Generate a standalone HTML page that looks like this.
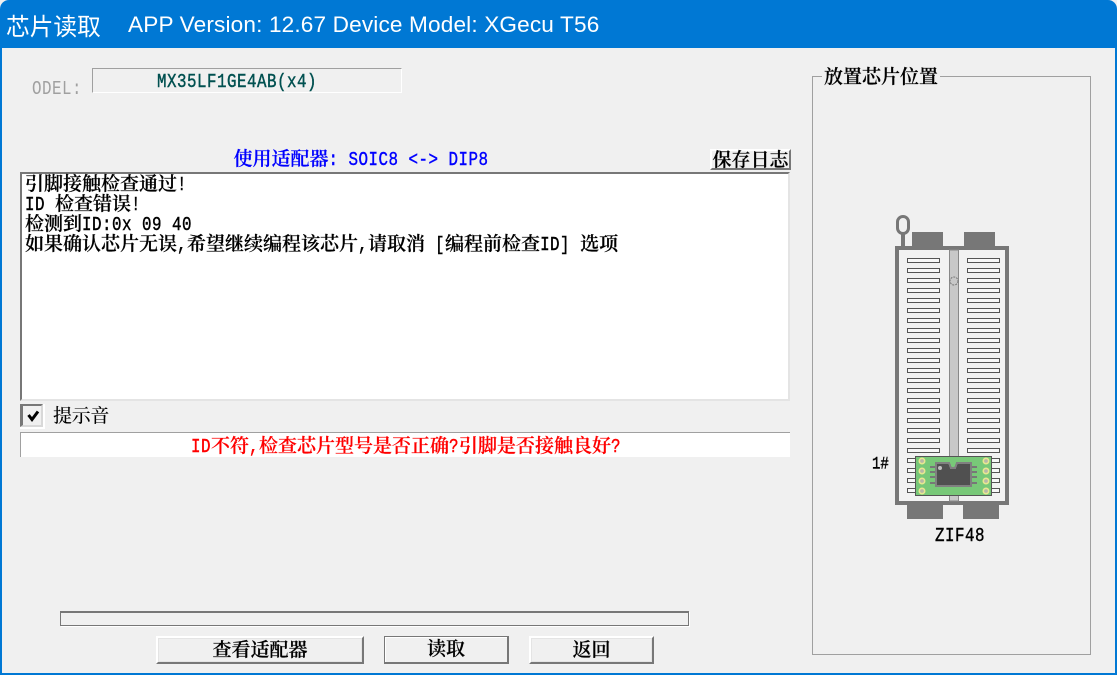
<!DOCTYPE html>
<html><head><meta charset="utf-8">
<style>
html,body{margin:0;padding:0;background:#fff}
#w{position:relative;width:1117px;height:675px;overflow:hidden;background:#f0f0f0;font-family:"Noto Serif CJK SC","Liberation Serif",serif;font-size:19px;color:#000}
#w *{box-sizing:border-box}
.a{position:absolute;white-space:pre;line-height:20px}
i{display:inline-block;font-style:normal;font-family:"Liberation Mono",monospace;font-size:15.83px;letter-spacing:.5px;font-weight:normal;white-space:pre;transform:translateY(-1px) scaleY(1.22);-webkit-text-stroke:.35px currentColor}
.t{font-weight:600;-webkit-text-stroke:.2px currentColor}
.btn{position:absolute;background:#f0f0f0;border:2px solid;border-color:#fff #777 #777 #fff;box-shadow:inset 0 0 0 1px #e4e4e4;text-align:center;white-space:nowrap;font-weight:600;-webkit-text-stroke:.2px currentColor}
</style></head><body>
<div id="w">
<div class="a" style="left:0;top:0;width:1117px;height:48px;background:#0078d4;border-radius:9px 9px 0 0"></div>
<div class="a" style="left:0;top:40px;width:2px;height:635px;background:#0078d4"></div>
<div class="a" style="left:1115px;top:40px;width:2px;height:635px;background:#0078d4"></div>
<div class="a" style="left:0;top:673px;width:1117px;height:2px;background:#0078d4"></div>
<div class="a" style="left:6px;top:11px;color:#fff;font:23.7px/28px 'Noto Sans CJK SC',sans-serif">芯片读取</div>
<div class="a" style="left:128px;top:11px;color:#fff;font:22.6px/28px 'Liberation Sans',sans-serif;letter-spacing:.15px">APP Version: 12.67 Device Model: XGecu T56</div>

<div class="a" style="left:32px;top:77px;color:#a0a0a0"><i style="-webkit-text-stroke:0">ODEL:</i></div>
<div class="a" style="left:92px;top:68px;width:310px;height:25px;border:1px solid;border-color:#a0a0a0 #fff #fff #a0a0a0"></div>
<div class="a" style="left:157px;top:70px;color:#005050"><i>MX35LF1GE4AB(x4)</i></div>

<div class="a t" style="left:233.500px;top:148px;color:#0000ff">使用适配器<i>: SOIC8 &lt;-&gt; DIP8</i></div>
<div class="btn" style="left:710px;top:149px;width:81px;height:21px;line-height:16px;box-shadow:none">保存日志</div>

<div class="a" style="left:20px;top:172px;width:770px;height:229px;background:#fff;border:2px solid;border-color:#777 #e4e4e4 #e4e4e4 #777"></div>
<div class="a t" style="left:25px;top:173px">引脚接触检查通过<i>!</i></div>
<div class="a t" style="left:25px;top:193px"><i>ID </i>检查错误<i>!</i></div>
<div class="a t" style="left:25px;top:213px">检测到<i>ID:0x 09 40</i></div>
<div class="a t" style="left:25px;top:233px">如果确认芯片无误<i>,</i>希望继续编程该芯片<i>,</i>请取消<i> [</i>编程前检查<i>ID] </i>选项</div>

<div class="a" style="left:20px;top:404px;width:25px;height:25px;background:#fff"></div>
<div class="a" style="left:20px;top:404px;width:23px;height:23px;background:#f0f0f0;border:2px solid;border-color:#777 #d8d8d8 #d8d8d8 #777;border-width:2px 2px 2px 3px"></div>
<svg class="a" style="left:20px;top:404px" width="25" height="25"><path d="M8.500 11 L12 15.500 L18 7.500" fill="none" stroke="#000" stroke-width="3"/></svg>
<div class="a" style="left:53px;top:405px;font-weight:500;width:57px;letter-spacing:-.3px">提示音</div>

<div class="a" style="left:20px;top:432px;width:770px;height:25px;background:#fff;border-top:1px solid #a0a0a0;border-left:1px solid #a0a0a0"></div>
<div class="a t" style="left:191px;top:435px;color:#ff0000"><i>ID</i>不符<i>,</i>检查芯片型号是否正确<i>?</i>引脚是否接触良好<i>?</i></div>

<div class="a" style="left:60px;top:611px;width:629px;height:15px;background:#f0f0f0;border:1px solid;border-width:2px 1px 1px 1px;border-color:#777;box-shadow:1px 1px 0 #fff"></div>
<div class="btn" style="left:156px;top:636px;width:208px;height:28px;line-height:22px">查看适配器</div>
<div class="btn" style="left:384px;top:636px;width:125px;height:28px;line-height:22px;border-color:#777;border-width:1px 2px 2px 1px;box-shadow:inset 1px 1px 0 #fff">读取</div>
<div class="btn" style="left:529px;top:636px;width:125px;height:28px;line-height:22px">返回</div>

<div class="a" style="left:812px;top:76px;width:279px;height:579px;border:1px solid #a0a0a0"></div>
<div class="a t" style="left:822px;top:66px;padding:0 2px;background:#f0f0f0;height:20px">放置芯片位置</div>

<svg class="a" style="left:860px;top:200px" width="170" height="320" shape-rendering="crispEdges">
<g fill="#777">
<rect x="52" y="32" width="31" height="15"/><rect x="104" y="32" width="31" height="15"/>
<rect x="47" y="305" width="36" height="14"/><rect x="103" y="305" width="36" height="14"/>
<rect x="41" y="28" width="4" height="20"/>
</g>
<rect x="37.500" y="16.500" width="11" height="17" rx="5.500" fill="#f0f0f0" stroke="#777" stroke-width="3" shape-rendering="auto"/>
<rect x="37" y="48" width="110" height="255" fill="#f2f2f2" stroke="#777" stroke-width="4"/>
<rect x="89.500" y="50" width="9" height="251" fill="#c8c8c8" stroke="#888" stroke-width="1"/>
<circle cx="94" cy="81" r="4" fill="none" stroke="#777" stroke-dasharray="2 1" shape-rendering="auto"/>
<g fill="#f8f8f8" stroke="#555" stroke-width="1">
<rect x="47.500" y="58.500" width="32" height="4"/><rect x="107.500" y="58.500" width="32" height="4"/>
<rect x="47.500" y="68.500" width="32" height="4"/><rect x="107.500" y="68.500" width="32" height="4"/>
<rect x="47.500" y="78.500" width="32" height="4"/><rect x="107.500" y="78.500" width="32" height="4"/>
<rect x="47.500" y="88.500" width="32" height="4"/><rect x="107.500" y="88.500" width="32" height="4"/>
<rect x="47.500" y="98.500" width="32" height="4"/><rect x="107.500" y="98.500" width="32" height="4"/>
<rect x="47.500" y="108.500" width="32" height="4"/><rect x="107.500" y="108.500" width="32" height="4"/>
<rect x="47.500" y="118.500" width="32" height="4"/><rect x="107.500" y="118.500" width="32" height="4"/>
<rect x="47.500" y="128.500" width="32" height="4"/><rect x="107.500" y="128.500" width="32" height="4"/>
<rect x="47.500" y="138.500" width="32" height="4"/><rect x="107.500" y="138.500" width="32" height="4"/>
<rect x="47.500" y="148.500" width="32" height="4"/><rect x="107.500" y="148.500" width="32" height="4"/>
<rect x="47.500" y="158.500" width="32" height="4"/><rect x="107.500" y="158.500" width="32" height="4"/>
<rect x="47.500" y="168.500" width="32" height="4"/><rect x="107.500" y="168.500" width="32" height="4"/>
<rect x="47.500" y="178.500" width="32" height="4"/><rect x="107.500" y="178.500" width="32" height="4"/>
<rect x="47.500" y="188.500" width="32" height="4"/><rect x="107.500" y="188.500" width="32" height="4"/>
<rect x="47.500" y="198.500" width="32" height="4"/><rect x="107.500" y="198.500" width="32" height="4"/>
<rect x="47.500" y="208.500" width="32" height="4"/><rect x="107.500" y="208.500" width="32" height="4"/>
<rect x="47.500" y="218.500" width="32" height="4"/><rect x="107.500" y="218.500" width="32" height="4"/>
<rect x="47.500" y="228.500" width="32" height="4"/><rect x="107.500" y="228.500" width="32" height="4"/>
<rect x="47.500" y="238.500" width="32" height="4"/><rect x="107.500" y="238.500" width="32" height="4"/>
<rect x="47.500" y="248.500" width="32" height="4"/><rect x="107.500" y="248.500" width="32" height="4"/>
<rect x="47.500" y="258.500" width="32" height="4"/><rect x="107.500" y="258.500" width="32" height="4"/>
<rect x="47.500" y="268.500" width="32" height="4"/><rect x="107.500" y="268.500" width="32" height="4"/>
<rect x="47.500" y="278.500" width="32" height="4"/><rect x="107.500" y="278.500" width="32" height="4"/>
<rect x="47.500" y="288.500" width="32" height="4"/><rect x="107.500" y="288.500" width="32" height="4"/>
</g>
<rect x="55.500" y="256.500" width="76" height="39" fill="#78c878" stroke="#555"/>
<g fill="#777"><rect x="70" y="266" width="6" height="2"/><rect x="70" y="271" width="6" height="2"/><rect x="70" y="276" width="6" height="2"/><rect x="70" y="282" width="6" height="2"/><rect x="111" y="266" width="6" height="2"/><rect x="111" y="271" width="6" height="2"/><rect x="111" y="276" width="6" height="2"/><rect x="111" y="282" width="6" height="2"/></g>
<path d="M76 263 H89 L91 268 H95 L97 263 H111 V286 H76 Z" fill="#505050" stroke="#808080" stroke-width="2"/>
<circle cx="80" cy="268" r="2" fill="#c0c0c0" shape-rendering="auto"/>
<g fill="#b8b8a8" stroke="#e8e890" stroke-width="1.600" shape-rendering="auto">
<circle cx="62" cy="261" r="2.700"/><circle cx="62" cy="271" r="2.700"/><circle cx="62" cy="281" r="2.700"/><circle cx="62" cy="291" r="2.700"/>
<circle cx="126" cy="261" r="2.700"/><circle cx="126" cy="271" r="2.700"/><circle cx="126" cy="281" r="2.700"/><circle cx="126" cy="291" r="2.700"/>
</g>
</svg>
<div class="a" style="left:872px;top:452px"><i style="font-size:14px;letter-spacing:0">1#</i></div>
<div class="a" style="left:935px;top:524px"><i>ZIF48</i></div>
</div>
</body></html>
